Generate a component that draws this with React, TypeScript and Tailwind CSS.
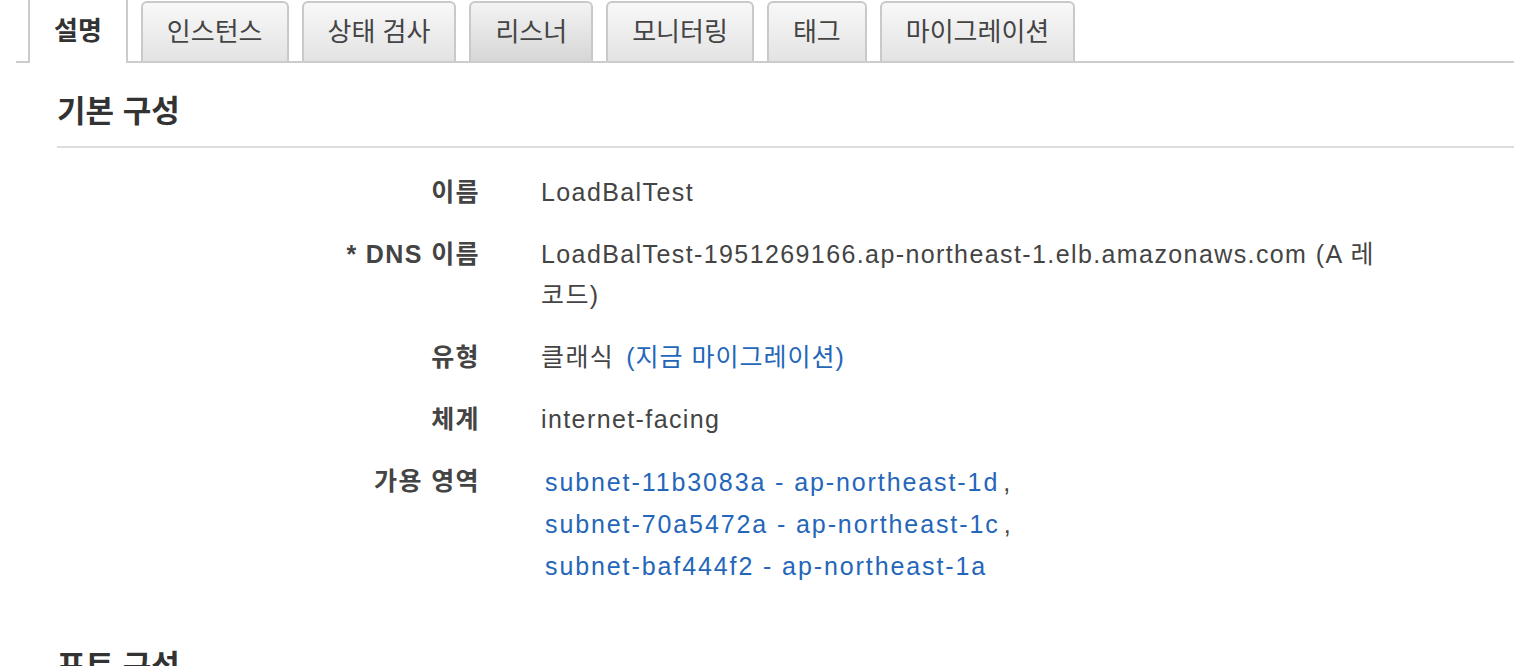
import React from 'react';

// 로드 밸런서 상세 — 설명 탭

type Tab = { label: string; active?: boolean; hover?: boolean };

const TABS: Tab[] = [
  { label: '설명', active: true },
  { label: '인스턴스' },
  { label: '상태 검사' },
  { label: '리스너', hover: true },
  { label: '모니터링' },
  { label: '태그' },
  { label: '마이그레이션' },
];

const SUBNETS = [
  'subnet-11b3083a - ap-northeast-1d',
  'subnet-70a5472a - ap-northeast-1c',
  'subnet-baf444f2 - ap-northeast-1a',
];

function Row({ label, children }: { label: React.ReactNode; children: React.ReactNode }) {
  return (
    <div className="flex pb-[21px]">
      <div className="w-[423px] shrink-0 text-right font-bold text-[#444]">{label}</div>
      <div className="pl-[61px] text-[#444]">{children}</div>
    </div>
  );
}

export default function App() {
  return (
    <div className="h-[666px] w-full overflow-hidden bg-white font-['Liberation_Sans','Noto_Sans_CJK_KR',sans-serif] text-[#444]">
      {/* 탭 */}
      <div className="ml-4 flex h-[63px] items-end gap-[13px] border-b-2 border-[#ccc] pl-3">
        {TABS.map((t) =>
          t.active ? (
            <div
              key={t.label}
              className="-mb-[2px] flex h-[63px] items-center border-x-2 border-[#ccc] bg-white px-6 text-[26px] font-bold text-[#333]"
            >
              {t.label}
            </div>
          ) : (
            <div
              key={t.label}
              className={`flex h-[60px] items-center rounded-t-[6px] border-2 border-b-0 border-[#c9c9c9] bg-linear-to-b px-6 text-[26px] text-[#444] ${
                t.hover ? 'from-[#f3f3f3] to-[#d6d6d6]' : 'from-[#f8f8f8] to-[#e3e3e3]'
              }`}
            >
              {t.label}
            </div>
          )
        )}
      </div>

      <h2 className="ml-[57px] mt-[29px] border-b-2 border-[#ddd] pb-[14px] text-[31px] font-bold leading-[40px] text-[#333]">
        기본 구성
      </h2>

      <div className="pt-6 text-[25px] leading-[41px] tracking-[1.4px]">
        <div className="ml-[57px]">
          <Row label="이름">LoadBalTest</Row>
          <Row label="* DNS 이름">
            LoadBalTest-1951269166.ap-northeast-1.elb.amazonaws.com (A 레
            <br />
            코드)
          </Row>
          <Row label="유형">
            클래식
            <a href="#" className="ml-[12px] tracking-[1px] text-[#2466b9]">
              (지금 마이그레이션)
            </a>
          </Row>
          <Row label="체계">internet-facing</Row>
          <Row label="가용 영역">
            <div className="flex flex-col pl-1 leading-[42px] tracking-[1.9px]">
              {SUBNETS.map((s, i) => (
                <div key={s}>
                  <a href="#" className="text-[#2466b9]">
                    {s}
                  </a>
                  {i < SUBNETS.length - 1 && <span className="ml-[4px]">,</span>}
                </div>
              ))}
            </div>
          </Row>
        </div>
      </div>

      <h2 className="ml-[57px] mt-[39px] text-[31px] font-bold leading-[40px] text-[#333]">포트 구성</h2>
    </div>
  );
}
